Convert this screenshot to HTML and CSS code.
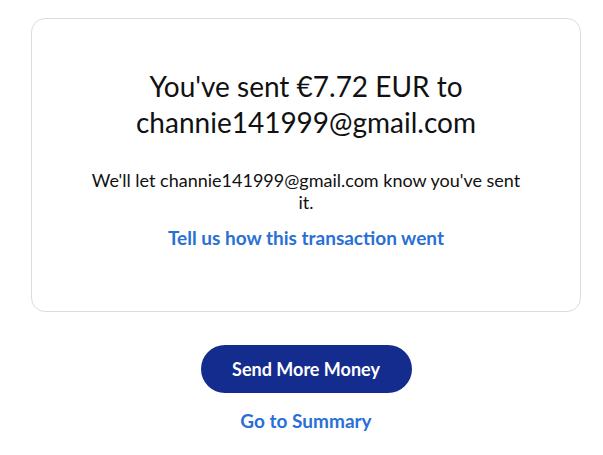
FILE: index.html
```html
<!DOCTYPE html>
<html lang="en">
<head>
<meta charset="utf-8">
<title>Sent</title>
<link rel="stylesheet" href="styles.css">
</head>
<body>
<main class="page">
  <section class="card">
    <h1 class="title">You've sent €7.72 EUR to channie141999@gmail.com</h1>
    <p class="note">We'll let channie141999@gmail.com know you've sent it.</p>
    <a class="link" href="#">Tell us how this transaction went</a>
  </section>
  <div class="actions">
    <a class="btn" href="#">Send More Money</a>
    <a class="link summary" href="#">Go to Summary</a>
  </div>
</main>
</body>
</html>
```
FILE: styles.css
```css
html, body { margin: 0; padding: 0; background: #fff; }
body { font-family: Lato, "Open Sans", sans-serif; color: #1a1a1a; }
.page { padding: 18px 22px 0 31px; }
.card {
  box-sizing: border-box;
  width: 550px;
  height: 294px;
  border: 1px solid #dcdcdc;
  border-radius: 14px;
  padding: 49px 50px 0;
  display: flex;
  flex-direction: column;
  align-items: center;
  text-align: center;
}
.title { margin: 0; font-size: 28px; font-weight: 400; line-height: 36px; max-width: 360px; color: #111; }
.note { margin: 29px 0 0; font-size: 18px; line-height: 22px; color: #111; max-width: 440px; }
.link { color: #2a6fd6; font-weight: 700; font-size: 19px; text-decoration: none; line-height: 22px; }
.card .link { margin-top: 14px; }
.actions { display: flex; flex-direction: column; align-items: center; width: 550px; padding-top: 33px; }
.btn {
  display: flex; align-items: center; justify-content: center;
  width: 211px; height: 48px; border-radius: 24px;
  background: #142c8e; color: #fff; font-weight: 700; font-size: 18px; text-decoration: none;
}
.summary { margin-top: 17px; font-size: 19px; }
```
